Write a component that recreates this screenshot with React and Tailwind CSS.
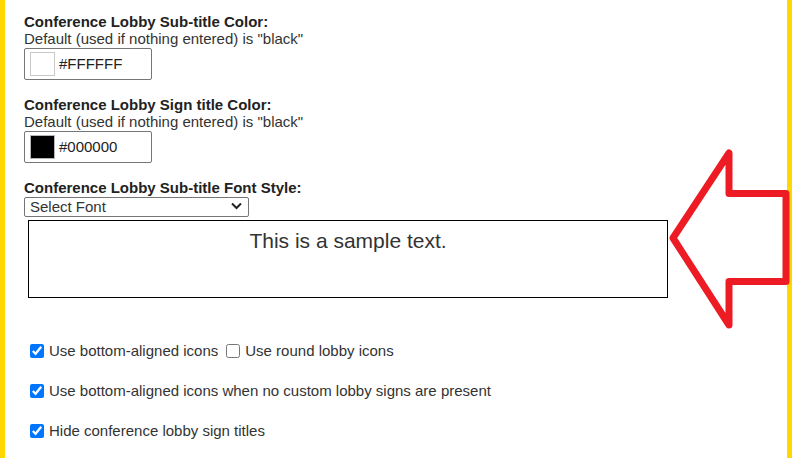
import { useState } from "react";

// color field: swatch + hex text, looks like the browser color input
function ColorField({ label, value, swatch }) {
  return (
    <div className="mb-[16px]">
      <div className="font-bold text-[#222] leading-[17px]">{label}</div>
      <div className="leading-[17px]">Default (used if nothing entered) is "black"</div>
      <div className="mt-px flex h-[32px] w-[128px] items-center rounded-[2px] border border-[#767676] pl-[5px]">
        <span
          className={`h-[24px] w-[25px] border ${
            swatch === "#000000" ? "border-[#b5b5b5] bg-black" : "border-[#c8c8c8] bg-white"
          }`}
        />
        <span className="ml-[4px] text-[#222]">{value}</span>
      </div>
    </div>
  );
}

function Check({ checked, label, onChange }) {
  return (
    <label className="flex items-center">
      <input
        type="checkbox"
        checked={checked}
        onChange={onChange}
        className="m-0 mr-[5px] h-[14px] w-[14px] accent-[#0075ff]"
      />
      <span>{label}</span>
    </label>
  );
}

export default function App() {
  const [opts, setOpts] = useState({
    bottom: true,
    round: false,
    noCustom: true,
    hideTitles: true,
  });
  const toggle = (k) => () => setOpts({ ...opts, [k]: !opts[k] });

  return (
    <div className="relative h-[458px] w-[792px] overflow-hidden bg-white font-['Liberation_Sans',Arial,sans-serif] text-[15px] text-[#333]">
      <div className="flex h-full border-l-[5px] border-r-[5px] border-[#ffd800]">
        <div className="flex-1 pl-[19px] pt-[13px]">
          <ColorField label="Conference Lobby Sub-title Color:" value="#FFFFFF" swatch="#FFFFFF" />
          <ColorField label="Conference Lobby Sign title Color:" value="#000000" swatch="#000000" />

          <div className="mt-[3px] font-bold text-[#222] leading-[17px]">
            Conference Lobby Sub-title Font Style:
          </div>
          <div className="relative h-[20px] w-[225px]">
            <select className="h-[20px] w-full appearance-none rounded-[2px] border border-[#767676] bg-white pl-[5px] text-[15px] leading-[18px] text-[#333]">
              <option>Select Font</option>
            </select>
            <svg
              className="pointer-events-none absolute right-[7px] top-[6px]"
              width="11"
              height="8"
              viewBox="0 0 11 8"
            >
              <path d="M1 1.5 L5.5 6 L10 1.5" fill="none" stroke="#222" strokeWidth="2" />
            </svg>
          </div>
          <div className="ml-[4px] mt-[4px] h-[78px] w-[640px] border border-black pt-[8px] text-center text-[21px] leading-[24px] text-[#333]">
            This is a sample text.
          </div>

          <div className="ml-[6px] mt-[44px] flex flex-col gap-[23px] leading-[17px]">
            <div className="flex h-[17px] items-center gap-[8px]">
              <Check checked={opts.bottom} onChange={toggle("bottom")} label="Use bottom-aligned icons" />
              <Check checked={opts.round} onChange={toggle("round")} label="Use round lobby icons" />
            </div>
            <div className="flex h-[17px] items-center">
              <Check
                checked={opts.noCustom}
                onChange={toggle("noCustom")}
                label="Use bottom-aligned icons when no custom lobby signs are present"
              />
            </div>
            <div className="flex h-[17px] items-center">
              <Check
                checked={opts.hideTitles}
                onChange={toggle("hideTitles")}
                label="Hide conference lobby sign titles"
              />
            </div>
          </div>
        </div>
      </div>

      {/* red annotation arrow drawn over the page */}
      <svg className="pointer-events-none absolute left-0 top-0" width="792" height="458">
        <polygon
          points="673,238 729,153 729,193.5 786,193.5 786,281.5 729,281.5 729,325"
          fill="none"
          stroke="#ed1c24"
          strokeWidth="7"
          strokeLinejoin="round"
        />
      </svg>
    </div>
  );
}
